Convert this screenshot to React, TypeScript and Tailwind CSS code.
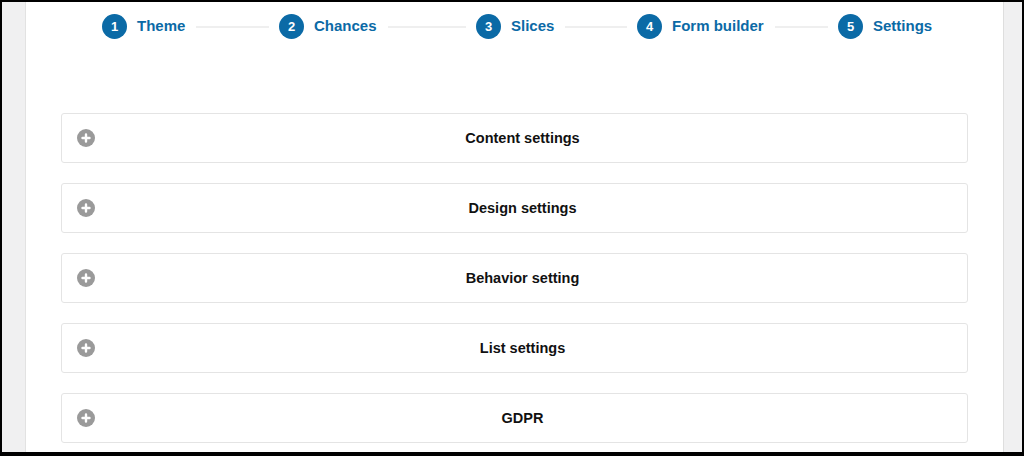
import React from 'react';

const steps = [
  { n: 1, label: 'Theme', w: 'w-[177px]' },
  { n: 2, label: 'Chances', w: 'w-[197px]' },
  { n: 3, label: 'Slices', w: 'w-[161px]' },
  { n: 4, label: 'Form builder', w: 'w-[201px]' },
  { n: 5, label: 'Settings', w: '' },
];

const sections = ['Content settings', 'Design settings', 'Behavior setting', 'List settings', 'GDPR'];

function PlusIcon() {
  return (
    <svg width="18" height="18" viewBox="0 0 18 18" className="shrink-0">
      <circle cx="9" cy="9" r="9" fill="#9a9a9a" />
      <path d="M9 5.5v7M5.5 9h7" stroke="#fff" strokeWidth="2.4" strokeLinecap="round" />
    </svg>
  );
}

export default function App() {
  return (
    <div
      className="w-[1024px] h-[456px] bg-black pt-[2px] px-[2px] pb-[4px] flex overflow-hidden"
      style={{ fontFamily: '"Liberation Sans", Arial, sans-serif' }}
    >
      <div className="flex-1 flex bg-[#f0f0f1]">
        {/* left admin strip */}
        <div className="w-[24px] border-r border-[#e2e2e2]" />

        {/* main content */}
        <div className="w-[977px] bg-white px-[35px]">
          {/* wizard steps */}
          <div className="flex items-center pl-[41px] mt-[12px] h-[25px]">
            {steps.map((s, i) => (
              <div key={s.n} className={`flex items-center ${s.w}`}>
                <div className="w-[25px] h-[25px] rounded-full bg-[#0b6aa6] text-white text-[13px] font-bold flex items-center justify-center shrink-0">
                  {s.n}
                </div>
                <span className="ml-[10px] text-[15px] font-bold text-[#0b6aa6] whitespace-nowrap">{s.label}</span>
                {i < steps.length - 1 && <div className="flex-1 h-[2px] bg-[#efefef] ml-[11px] mr-[10px]" />}
              </div>
            ))}
          </div>

          {/* accordion panels */}
          <div className="mt-[74px] flex flex-col gap-[20px]">
            {sections.map((t) => (
              <div
                key={t}
                className="h-[50px] border border-[#e4e4e4] rounded-[3px] flex items-center pl-[15px] pr-[17px] bg-white"
              >
                <PlusIcon />
                <div className="flex-1 text-center text-[14.5px] font-bold text-[#111] pt-[2px]">{t}</div>
              </div>
            ))}
          </div>
        </div>

        {/* right strip */}
        <div className="flex-1 border-l border-[#dedede]" />
      </div>
    </div>
  );
}
